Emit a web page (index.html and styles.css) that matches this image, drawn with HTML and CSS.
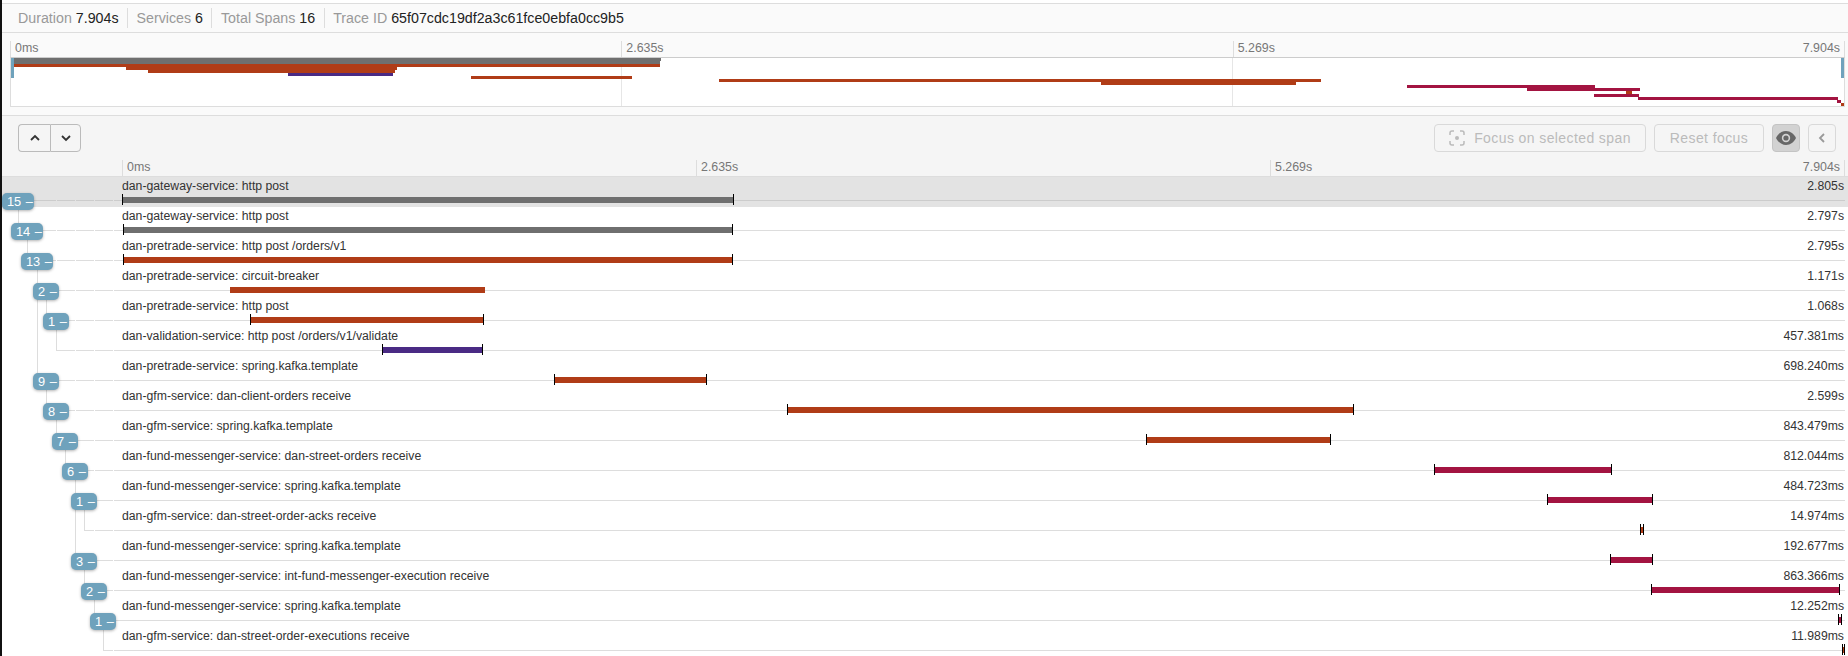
FILE: index.html
```html
<!DOCTYPE html>
<html lang="en">
<head>
    <meta charset="UTF-8">
    <title>Trace 65f07cd</title>
    <link rel="stylesheet" href="styles.css">
</head>
<body>
    <div class="stats">
        <div class="stat">Duration <b>7.904s</b></div>
        <div class="stat">Services <b>6</b></div>
        <div class="stat">Total Spans <b>16</b></div>
        <div class="stat">Trace ID <b>65f07cdc19df2a3c61fce0ebfa0cc9b5</b></div>
    </div>

    <div class="minimap">
        <div class="ticks">
            <span>0ms</span>
            <span>2.635s</span>
            <span class="tick-split"><span>5.269s</span><span>7.904s</span></span>
        </div>
        <div class="mini-box">
            <div class="handle"></div>
            <div class="handle handle-right"></div>
            <div class="mini grey" style="margin-left:0%;width:35.45%"></div>
            <div class="mini grey" style="margin-left:0.05%;width:35.36%"></div>
            <div class="mini rust" style="margin-left:0.06%;width:35.32%"></div>
            <div class="mini rust" style="margin-left:6.29%;width:14.77%"></div>
            <div class="mini rust" style="margin-left:7.47%;width:13.46%"></div>
            <div class="mini purple" style="margin-left:15.12%;width:5.74%"></div>
            <div class="mini rust" style="margin-left:25.11%;width:8.78%"></div>
            <div class="mini rust" style="margin-left:38.64%;width:32.83%"></div>
            <div class="mini rust" style="margin-left:59.44%;width:10.67%"></div>
            <div class="mini wine" style="margin-left:76.16%;width:10.27%"></div>
            <div class="mini wine" style="margin-left:82.72%;width:6.13%"></div>
            <div class="mini rust" style="margin-left:88.12%;width:0.3%"></div>
            <div class="mini wine" style="margin-left:86.38%;width:2.44%"></div>
            <div class="mini wine" style="margin-left:88.76%;width:10.92%"></div>
            <div class="mini wine" style="margin-left:99.64%;width:0.2%"></div>
            <div class="mini rust" style="margin-left:99.84%;width:0.16%"></div>
        </div>
    </div>

    <div class="toolbar">
        <div class="controls">
            <div class="btn-pair">
                <button class="btn arrow">
                    <svg viewBox="0 0 12 12" width="12" height="12"><path d="M2 8l4-4 4 4" fill="none" stroke="#333" stroke-width="1.8"/></svg>
                </button>
                <button class="btn arrow">
                    <svg viewBox="0 0 12 12" width="12" height="12"><path d="M2 4l4 4 4-4" fill="none" stroke="#333" stroke-width="1.8"/></svg>
                </button>
            </div>
            <div class="controls-right">
                <button class="btn disabled focus">
                    <svg viewBox="0 0 16 16" width="16" height="16"><path d="M1 5V3a2 2 0 0 1 2-2h2M11 1h2a2 2 0 0 1 2 2v2M15 11v2a2 2 0 0 1-2 2h-2M5 15H3a2 2 0 0 1-2-2v-2" fill="none" stroke="#bbb" stroke-width="1.5"/><circle cx="8" cy="8" r="2" fill="#bbb"/></svg>
                    Focus on selected span
                </button>
                <button class="btn disabled reset">Reset focus</button>
                <button class="btn square eye">
                    <svg viewBox="0 0 20 14" width="20" height="14"><path d="M10 0C5.500 0 2 3 0 7c2 4 5.500 7 10 7s8-3 10-7c-2-4-5.500-7-10-7z" fill="#666"/><circle cx="10" cy="7" r="4.200" fill="#d2d2d2"/><circle cx="10" cy="7" r="2.600" fill="#666"/></svg>
                </button>
                <button class="btn square">
                    <svg viewBox="0 0 12 12" width="12" height="12"><path d="M8 2L4 6l4 4" fill="none" stroke="#999" stroke-width="1.800"/></svg>
                </button>
            </div>
        </div>
        <div class="ticks header-ticks">
            <span>0ms</span>
            <span>2.635s</span>
            <span class="tick-split"><span>5.269s</span><span>7.904s</span></span>
        </div>
    </div>

    <div class="rows">
        <div class="row selected">
            <div class="row-line" style="left:10px"></div>
            <div class="badge" style="left:0">15 –</div>
            <div class="row-head"><span>dan-gateway-service: http post</span><span>2.805s</span></div>
            <div class="track"><div class="bar grey caps" style="margin-left:0%;width:35.43%"></div></div>
        </div>
        <div class="row">
            <div class="row-line" style="left:19px"></div>
            <div class="badge" style="left:9px">14 –</div>
            <div class="row-head"><span>dan-gateway-service: http post</span><span>2.797s</span></div>
            <div class="track"><div class="bar grey caps" style="margin-left:0.05%;width:35.33%"></div></div>
        </div>
        <div class="row">
            <div class="row-line" style="left:29px"></div>
            <div class="badge" style="left:19px">13 –</div>
            <div class="row-head"><span>dan-pretrade-service: http post /orders/v1</span><span>2.795s</span></div>
            <div class="track"><div class="bar rust caps" style="margin-left:0.06%;width:35.33%"></div></div>
        </div>
        <div class="row">
            <div class="row-line" style="left:41px"></div>
            <div class="badge small" style="left:31px">2 –</div>
            <div class="row-head"><span>dan-pretrade-service: circuit-breaker</span><span>1.171s</span></div>
            <div class="track"><div class="bar rust" style="margin-left:6.24%;width:14.82%"></div></div>
        </div>
        <div class="row">
            <div class="row-line" style="left:51px"></div>
            <div class="badge small" style="left:41px">1 –</div>
            <div class="row-head"><span>dan-pretrade-service: http post</span><span>1.068s</span></div>
            <div class="track"><div class="bar rust caps" style="margin-left:7.42%;width:13.51%"></div></div>
        </div>
        <div class="row">
            <div class="row-line" style="left:54px"></div>
            <div class="row-head"><span>dan-validation-service: http post /orders/v1/validate</span><span>457.381ms</span></div>
            <div class="track"><div class="bar purple caps" style="margin-left:15.07%;width:5.79%"></div></div>
        </div>
        <div class="row">
            <div class="row-line" style="left:41px"></div>
            <div class="badge small" style="left:31px">9 –</div>
            <div class="row-head"><span>dan-pretrade-service: spring.kafka.template</span><span>698.240ms</span></div>
            <div class="track"><div class="bar rust caps" style="margin-left:25.06%;width:8.83%"></div></div>
        </div>
        <div class="row">
            <div class="row-line" style="left:51px"></div>
            <div class="badge small" style="left:41px">8 –</div>
            <div class="row-head"><span>dan-gfm-service: dan-client-orders receive</span><span>2.599s</span></div>
            <div class="track"><div class="bar rust caps" style="margin-left:38.59%;width:32.88%"></div></div>
        </div>
        <div class="row">
            <div class="row-line" style="left:60px"></div>
            <div class="badge small" style="left:50px">7 –</div>
            <div class="row-head"><span>dan-gfm-service: spring.kafka.template</span><span>843.479ms</span></div>
            <div class="track"><div class="bar rust caps" style="margin-left:59.44%;width:10.67%"></div></div>
        </div>
        <div class="row">
            <div class="row-line" style="left:70px"></div>
            <div class="badge small" style="left:60px">6 –</div>
            <div class="row-head"><span>dan-fund-messenger-service: dan-street-orders receive</span><span>812.044ms</span></div>
            <div class="track"><div class="bar wine caps" style="margin-left:76.16%;width:10.27%"></div></div>
        </div>
        <div class="row">
            <div class="row-line" style="left:79px"></div>
            <div class="badge small" style="left:69px">1 –</div>
            <div class="row-head"><span>dan-fund-messenger-service: spring.kafka.template</span><span>484.723ms</span></div>
            <div class="track"><div class="bar wine caps" style="margin-left:82.72%;width:6.13%"></div></div>
        </div>
        <div class="row">
            <div class="row-line" style="left:82px"></div>
            <div class="row-head"><span>dan-gfm-service: dan-street-order-acks receive</span><span>14.974ms</span></div>
            <div class="track"><div class="bar rust caps" style="margin-left:88.12%;width:0.19%"></div></div>
        </div>
        <div class="row">
            <div class="row-line" style="left:79px"></div>
            <div class="badge small" style="left:69px">3 –</div>
            <div class="row-head"><span>dan-fund-messenger-service: spring.kafka.template</span><span>192.677ms</span></div>
            <div class="track"><div class="bar wine caps" style="margin-left:86.38%;width:2.44%"></div></div>
        </div>
        <div class="row">
            <div class="row-line" style="left:89px"></div>
            <div class="badge small" style="left:79px">2 –</div>
            <div class="row-head"><span>dan-fund-messenger-service: int-fund-messenger-execution receive</span><span>863.366ms</span></div>
            <div class="track"><div class="bar wine caps" style="margin-left:88.76%;width:10.92%"></div></div>
        </div>
        <div class="row">
            <div class="row-line" style="left:98px"></div>
            <div class="badge small" style="left:88px">1 –</div>
            <div class="row-head"><span>dan-fund-messenger-service: spring.kafka.template</span><span>12.252ms</span></div>
            <div class="track"><div class="bar wine caps" style="margin-left:99.64%;width:0.155%"></div></div>
        </div>
        <div class="row">
            <div class="row-line" style="left:101px"></div>
            <div class="row-head"><span>dan-gfm-service: dan-street-order-executions receive</span><span>11.989ms</span></div>
            <div class="track"><div class="bar rust caps" style="margin-left:99.84%;width:0.152%"></div></div>
        </div>

        <!-- tree connectors and the small breaks in the row lines -->
        <svg class="tree" width="122" height="480">
            <path class="tree-v" d="M16.500 33V47M25.500 63V77M35.500 93V197M44.500 123V137M44.500 213V227M54.500 153V173M54.500 243V257M63.500 273V287M73.500 303V377M82.500 333V353M82.500 393V407M92.500 423V437M101.500 453V473"/>
            <path class="tree-gap first" d="M54.500 23v1M73.500 23v1M92.500 23v1M111.500 23v1"/>
            <path class="tree-gap" d="M54.500 53v1M73.500 53v1M92.500 53v1M111.500 53v1M54.500 83v1M73.500 83v1M92.500 83v1M111.500 83v1M73.500 113v1M92.500 113v1M111.500 113v1M73.500 143v1M92.500 143v1M111.500 143v1M73.500 173v1M92.500 173v1M111.500 173v1M73.500 203v1M92.500 203v1M111.500 203v1M73.500 233v1M92.500 233v1M111.500 233v1M92.500 263v1M111.500 263v1M92.500 293v1M111.500 293v1M111.500 323v1M92.500 353v1M111.500 353v1M111.500 383v1M111.500 413v1M111.500 443v1M111.500 473v1"/>
        </svg>
    </div>
</body>
</html>
```

FILE: styles.css
```css
html {
    overflow: hidden;
}

body {
    margin: 0;
    height: 656px;
    overflow: hidden;
    border-left: 2px solid #111;
    background: #fff;
    color: #333;
    font-family: "Liberation Sans", Arial, sans-serif;
    font-size: 12.24px;
}

/* stats */
.stats {
    display: flex;
    align-items: center;
    height: 28px;
    margin-top: 3px;
    padding-left: 16px;
    border-top: 1px solid #ddd;
    border-bottom: 1px solid #ddd;
    background: #fafafa;
    color: #999;
    font-size: 14.24px;
}

.stat {
    padding-right: 8.5px;
    margin-right: 8.5px;
    line-height: 20px;
    border-right: 1px solid #ddd;
}

.stat:last-child {
    border-right: none;
}

.stat b {
    color: #222;
    font-weight: normal;
}

/* minimap */
.minimap {
    height: 74px;
    padding: 8px 3px 0 8px;
    border-bottom: 1px solid #ddd;
    background: #fafafa;
}

.ticks {
    display: grid;
    grid-template-columns: 1fr 1fr 1fr;
    height: 16px;
    line-height: 15px;
    font-size: 12.4px;
    color: #777;
    border-right: 1px solid #ddd;
}

.ticks > span {
    padding: 0 4px;
    border-left: 1px solid #ddd;
}

.tick-split {
    display: flex;
    justify-content: space-between;
}

.mini-box {
    position: relative;
    height: 48px;
    border: 1px solid #ddd;
    border-top-color: #ccc;
    background-color: #fff;
    background-image:
        linear-gradient(#e6e6e6, #e6e6e6),
        linear-gradient(#e6e6e6, #e6e6e6);
    background-size: 1px 100%;
    background-position: 33.3% 0, 66.65% 0;
    background-repeat: no-repeat;
}

.mini {
    height: 3px;
}

.handle {
    position: absolute;
    top: 0;
    left: 0;
    width: 3px;
    height: 20px;
    background: #6fa2bc;
}

.handle-right {
    left: auto;
    right: 0;
}

.grey { background: #6f6f6f; }
.rust { background: #b03c17; }
.purple { background: #4a2a84; }
.wine { background: #a31441; }

/* toolbar */
.toolbar {
    height: 60px;
    border-bottom: 1px solid #ddd;
    background: #f5f5f5;
}

.controls {
    display: flex;
    justify-content: space-between;
    height: 28px;
    padding: 8px 12px 0 16px;
}

.controls-right {
    display: flex;
    gap: 8px;
}

.btn-pair {
    display: flex;
}

.btn {
    display: flex;
    align-items: center;
    justify-content: center;
    height: 28px;
    padding: 0;
    border: 1px solid #d9d9d9;
    border-radius: 4px;
    background: transparent;
    font-family: "Liberation Sans", Arial, sans-serif;
    font-size: 14px;
    line-height: 24px;
}

.arrow {
    width: 32px;
    border-color: #bbb;
}

.arrow:first-child {
    border-radius: 4px 0 0 4px;
    border-right: none;
}

.arrow:last-child {
    width: 31px;
    border-radius: 0 4px 4px 0;
}

.disabled {
    padding-bottom: 1px;
    color: #bbb;
    letter-spacing: 0.4px;
}

.focus {
    width: 212px;
    gap: 9px;
}

.reset {
    width: 110px;
}

.square {
    width: 28px;
}

.eye {
    background: #d2d2d2;
    border-color: #c4c4c4;
}

.header-ticks {
    margin: 8px 3px 0 120px;
}

/* span rows */
.rows {
    position: relative;
}

.row {
    position: relative;
    height: 30px;
}

.row.selected {
    background: #e3e3e3;
}

.row-line {
    position: absolute;
    top: 23px;
    right: 3px;
    height: 1px;
    background: #ddd;
}

.selected .row-line {
    background: #ccc;
}

.row-head {
    display: flex;
    justify-content: space-between;
    height: 18px;
    line-height: 18px;
    padding: 0 4px 0 120px;
}

.track {
    margin: 2px 3.500px 0 120.400px;
}

.bar {
    position: relative;
    z-index: 2;
    height: 6px;
}

.caps::before,
.caps::after {
    content: "";
    position: absolute;
    top: -3px;
    width: 1px;
    height: 11px;
    background: #000;
}

.caps::before {
    left: 0;
}

.caps::after {
    right: -1px;
}

.badge {
    position: absolute;
    top: 16px;
    z-index: 3;
    width: 32px;
    height: 17px;
    padding-left: 5px;
    box-sizing: border-box;
    border-radius: 5px;
    background: #6fa2bc;
    box-shadow: 0 1px 3px rgba(0, 0, 0, 0.3);
    color: #fff;
    font-size: 12.8px;
    word-spacing: 1px;
    line-height: 17px;
}

.badge.small {
    width: 26px;
}

.tree {
    position: absolute;
    top: 0;
    left: 0;
}

.tree-v {
    fill: none;
    stroke: #ddd;
    stroke-width: 1;
}

.tree-gap {
    fill: none;
    stroke: #fff;
    stroke-width: 1;
}

.tree-gap.first {
    stroke: #e3e3e3;
}
```
